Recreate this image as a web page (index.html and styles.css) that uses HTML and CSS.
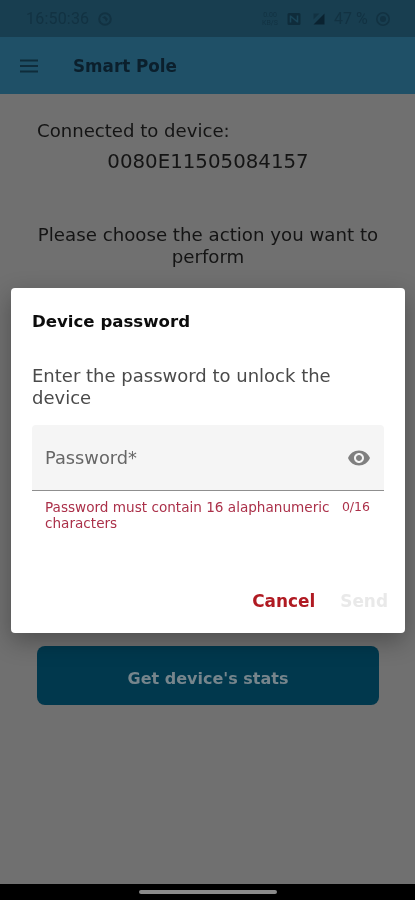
FILE: index.html
```html
<!DOCTYPE html>
<html lang="en">
<head>
<meta charset="utf-8">
<title>Smart Pole</title>
<link rel="stylesheet" href="styles.css">
</head>
<body>
<div class="phone">
  <div class="status">
    <span class="clock">16:50:36</span>
    <svg class="st-ic at" width="16" height="16" viewBox="0 0 16 16"><circle cx="8" cy="8" r="5.8" fill="none" stroke="#123242" stroke-width="2"/><path d="M5 6.5 8 5l3 3-2 3-1-3z" fill="#123242"/></svg>
    <span class="spacer"></span>
    <span class="speed"><span>0.00</span><span>KB/S</span></span>
    <svg class="st-ic nfc" width="14" height="14" viewBox="0 0 14 14"><rect x="0.5" y="1" width="13" height="12" rx="1.5" fill="#0f2c3b"/><path d="M3.5 3.5v7M10.5 3.5v7M3.5 4l7 6" stroke="#1a4558" stroke-width="1.6" fill="none"/></svg>
    <svg class="st-ic sig" width="12" height="14" viewBox="0 0 12 14"><path d="M11.5 1.5v11H.5z" fill="#0a2230"/><path d="M.5 1.5h6l-6 6z" fill="#123242"/></svg>
    <span class="batt">47 %</span>
    <svg class="st-ic" width="16" height="16" viewBox="0 0 16 16"><circle cx="8" cy="8" r="6.2" fill="none" stroke="#123242" stroke-width="1.6"/><circle cx="8" cy="8" r="3" fill="#123242"/></svg>
  </div>
  <header class="appbar">
    <svg class="menu" width="18" height="14" viewBox="0 0 18 14"><path d="M0 1.5h18M0 7h18M0 12.5h18" stroke="#0f2c3b" stroke-width="2"/></svg>
    <span class="app-title">Smart Pole</span>
  </header>
  <main class="content">
    <p class="connected">Connected to device:</p>
    <p class="device-id">0080E11505084157</p>
    <p class="prompt">Please choose the action you want to perform</p>
    <button class="stats">Get device's stats</button>
  </main>
  <div class="navbar"><span class="pill"></span></div>

  <section class="dialog">
    <h2 class="dlg-title">Device password</h2>
    <p class="dlg-body">Enter the password to unlock the device</p>
    <div class="field">
      <span class="label">Password*</span>
      <svg class="eye" width="24" height="24" viewBox="0 0 24 24"><path fill="#808080" d="M12 4.5C7 4.5 2.73 7.61 1 12c1.73 4.39 6 7.5 11 7.5s9.27-3.11 11-7.5c-1.73-4.39-6-7.5-11-7.5zM12 17c-2.76 0-5-2.24-5-5s2.24-5 5-5 5 2.24 5 5-2.24 5-5 5zm0-8c-1.66 0-3 1.34-3 3s1.34 3 3 3 3-1.34 3-3-1.34-3-3-3z"/></svg>
    </div>
    <div class="helper">
      <span class="err">Password must contain 16 alaphanumeric characters</span>
      <span class="count">0/16</span>
    </div>
    <div class="actions">
      <span class="btn cancel">Cancel</span>
      <span class="btn send">Send</span>
    </div>
  </section>
</div>
</body>
</html>
```
FILE: styles.css
```css
* { box-sizing: border-box; }
html, body { margin: 0; padding: 0; }
body { font-family: "DejaVu Sans", "Liberation Sans", sans-serif; background: #000; }
.phone {
  position: relative;
  width: 415px;
  height: 900px;
  display: flex;
  flex-direction: column;
  overflow: hidden;
  background: #707070;
  filter: blur(0.45px);
}
.status {
  height: 37px;
  flex: none;
  display: flex;
  align-items: center;
  padding: 0 24px 0 26px;
  background: #183e50;
  color: #123242;
  font-family: "Roboto", sans-serif;
  font-size: 16px;
}
.clock { width: 63px; white-space: nowrap; letter-spacing: .2px; }
.st-ic { flex: none; display: block; }
.at { margin-left: 8px; }
.spacer { flex: 1; }
.speed {
  display: flex;
  flex-direction: column;
  align-items: center;
  font-size: 7px;
  line-height: 8px;
  width: 18px;
  white-space: nowrap;
}
.nfc { margin-left: 8px; }
.sig { margin-left: 12px; }
.batt { margin-left: 9px; margin-right: 5px; width: 36px; white-space: nowrap; }
.appbar {
  height: 57px;
  flex: none;
  display: flex;
  align-items: center;
  padding-left: 20px;
  background: #1f5067;
}
.app-title {
  margin-left: 35px;
  font-size: 16.8px;
  font-weight: 700;
  color: #0b1f2c;
  white-space: nowrap;
}
.content {
  flex: 1;
  display: flex;
  flex-direction: column;
  padding: 0 36px 0 37px;
  color: #141414;
}
.content p { margin: 0; }
.connected { margin-top: 27px !important; font-size: 18.1px; line-height: 20px; }
.device-id { margin-top: 10px !important; font-size: 19.8px; line-height: 22px; text-align: center; }
.prompt { margin: 51px -2px 0 !important; font-size: 18.2px; line-height: 22px; text-align: center; }
.stats {
  margin-top: 378px;
  height: 59px;
  flex: none;
  border: 0;
  border-radius: 8px;
  padding: 6px 0 0;
  background: #01384d;
  color: #76858c;
  font: 700 16px "DejaVu Sans", "Liberation Sans", sans-serif;
}
.navbar {
  height: 16px;
  flex: none;
  display: flex;
  justify-content: center;
  padding-top: 6px;
  background: #000;
}
.pill { width: 138px; height: 4px; border-radius: 2px; background: #8a8a8a; }
.dialog {
  position: absolute;
  left: 11px;
  top: 288px;
  width: 394px;
  height: 345px;
  display: flex;
  flex-direction: column;
  padding: 0 21px;
  background: #fff;
  border-radius: 4px;
  box-shadow: 0 8px 24px rgba(0,0,0,.3);
}
.dlg-title {
  margin: 24px 0 0;
  font-size: 16.6px;
  line-height: 20px;
  font-weight: 700;
  color: #0c0c0c;
}
.dlg-body {
  margin: 33px 0 0;
  font-size: 18px;
  line-height: 22px;
  color: #4a4a4a;
}
.field {
  margin-top: 16px;
  height: 66px;
  display: flex;
  align-items: center;
  justify-content: space-between;
  padding: 0 13px;
  background: #f5f5f5;
  border-bottom: 1px solid #8f8f8f;
  border-radius: 4px 4px 0 0;
}
.label { font-size: 17.8px; color: #666; }
.eye { display: block; }
.helper {
  display: flex;
  justify-content: space-between;
  gap: 12px;
  margin-top: 8px;
  padding: 0 14px 0 13px;
  font-size: 13.6px;
  line-height: 16px;
  color: #ab3049;
}
.err { flex: 1; }
.count { font-size: 12.5px; }
.actions {
  margin-top: auto;
  margin-bottom: 22px;
  display: flex;
  justify-content: flex-end;
  gap: 25px;
  margin-right: -4px;
  font-size: 16.9px;
  line-height: 20px;
  font-weight: 700;
}
.cancel { color: #b01a22; }
.send { color: #e9e9e9; }
```
